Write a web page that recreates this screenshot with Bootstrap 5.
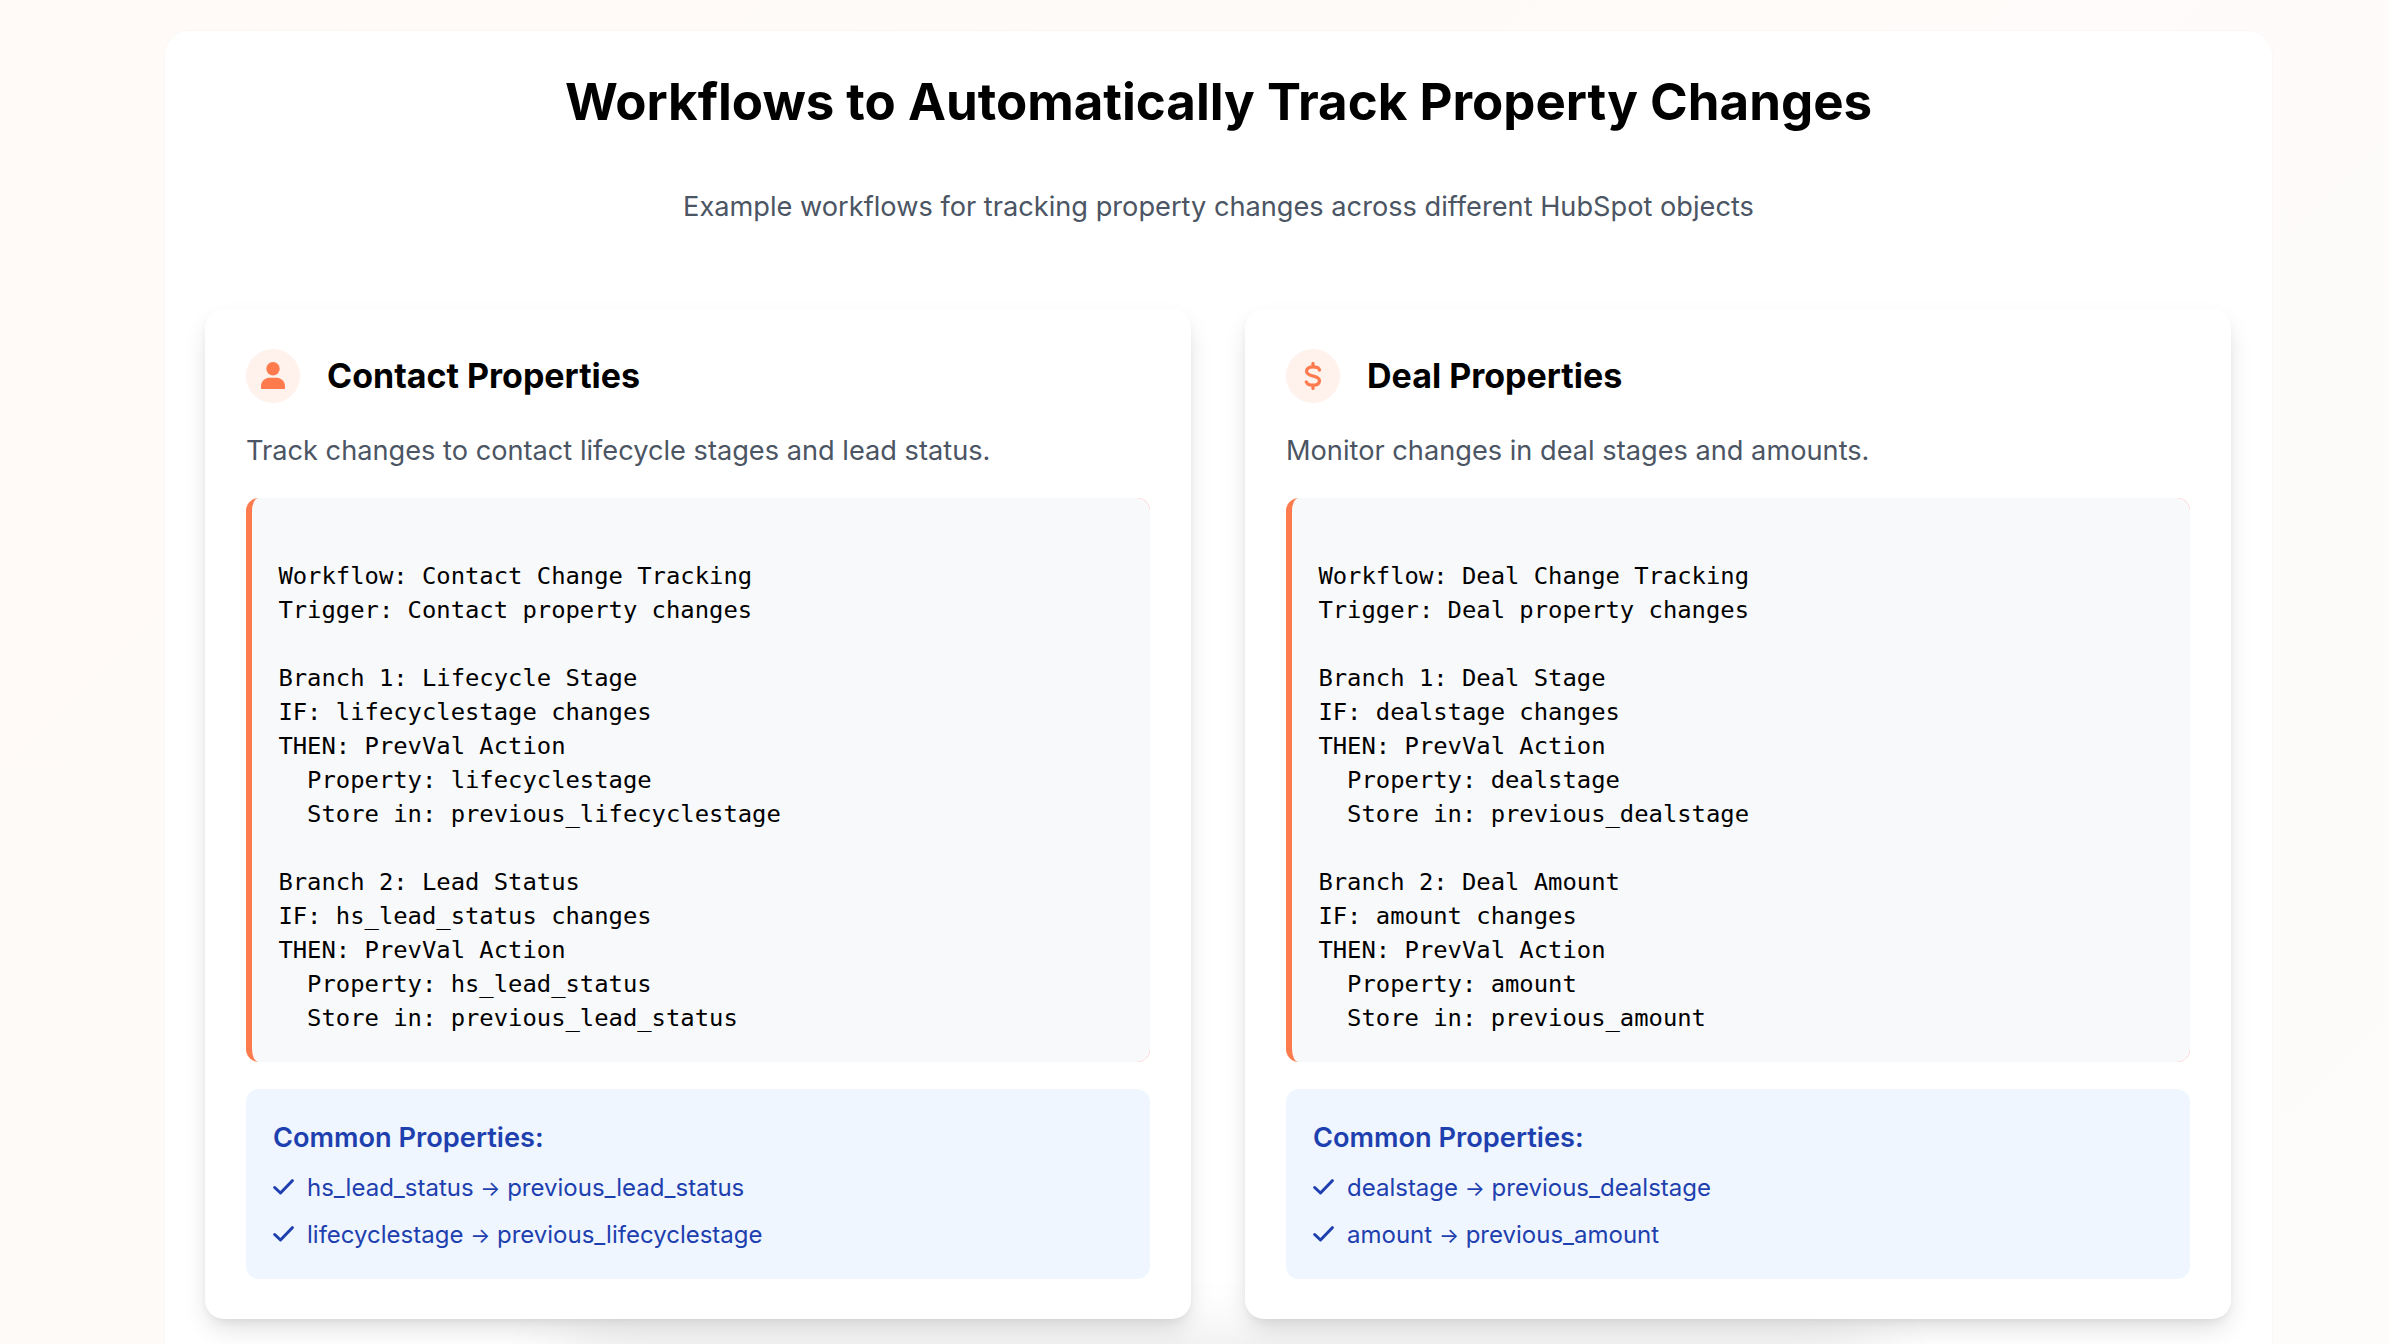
<!doctype html>
<html lang="en"><head><meta charset="utf-8"><title>Workflows</title>
<link href="https://cdn.jsdelivr.net/npm/bootstrap@5.3.0/dist/css/bootstrap.min.css" rel="stylesheet">
<style>
html,body{height:100%;overflow:hidden}
body{font-family:Inter,"Liberation Sans",sans-serif;background:linear-gradient(135deg,#fffaf8 0%,#fdfcfb 100%);padding:31px 117px 0 165px;color:#000}
.sheet{background:#fff;border-radius:24px;padding:40px;box-shadow:0 0 0 1px rgba(200,190,185,.05);min-height:1500px}
.page-title{font-size:51px;font-weight:700;line-height:1.2;margin:0;text-align:center;color:#000}
.page-sub{font-size:27.2px;line-height:1.5;color:#4b5563;margin:54.500px 0 0;text-align:center}
.two-up{display:grid;grid-template-columns:986px 986px;column-gap:54px;margin-top:81.500px}
.panel{background:#fff;border-radius:19px;padding:40px 41px;box-shadow:0 12px 26px -4px rgba(0,0,0,.14),0 4px 8px -2px rgba(0,0,0,.06);height:1010px}
.round-ic{width:54px;height:54px;border-radius:50%;background:#fff1eb;flex:none}
.panel-title{font-size:34px;font-weight:700;line-height:1.2;margin:0 0 0 27px;color:#000}
.panel-desc{font-size:27.2px;line-height:1.5;color:#4b5563;margin:28px 0 0}
.code-wrap{background:#ff7a4d;border-radius:13px;padding-left:6.400px;margin-top:26px}
.code-box{font-family:"DejaVu Sans Mono",monospace;font-size:23.850px;line-height:34px;color:#000;background:#f8f9fb;border-radius:6.600px 13px 13px 6.600px / 13px;margin:0;padding:26.800px 26px 0;height:564px;overflow:hidden}
.props{background:#eff6ff;border-radius:13px;padding:33px 27px 0;margin-top:27px;height:190px;color:#1e40af}
.props-title{font-size:27.2px;font-weight:600;line-height:1.2;margin:0 0 17.500px;color:#1e40af}
.prop-line{font-size:24px;line-height:31px;height:47px;display:flex;align-items:flex-start}
.prop-line svg{flex:none;margin:7px 13px 0 0}
.arw{font-size:21px}
.next-block{width:1310px;height:200px;margin-top:31px;background:#fff;box-shadow:0 0 74px rgba(0,0,0,.12)}
</style></head>
<body>
<main class="sheet">
<h1 class="page-title">Workflows to Automatically Track Property Changes</h1>
<p class="page-sub">Example workflows for tracking property changes across different HubSpot objects</p>
<div class="two-up">
<section class="panel">
<div class="d-flex align-items-center">
<span class="round-ic d-flex align-items-center justify-content-center">
<svg width="24" height="27" viewBox="0 0 24 27"><circle cx="12" cy="6.700" r="6.700" fill="#ff7a4d"/><path d="M.7 27C.2 27 0 26.700 0 26v-2C0 19.500 4 15.800 8 15.800h8c4 0 8 3.700 8 8.200v2c0 .7-.2 1-.7 1z" fill="#ff7a4d"/></svg>
</span>
<h2 class="panel-title">Contact Properties</h2>
</div>
<p class="panel-desc">Track changes to contact lifecycle stages and lead status.</p>
<div class="code-wrap"><pre class="code-box">

Workflow: Contact Change Tracking
Trigger: Contact property changes

Branch 1: Lifecycle Stage
IF: lifecyclestage changes
THEN: PrevVal Action
  Property: lifecyclestage
  Store in: previous_lifecyclestage

Branch 2: Lead Status
IF: hs_lead_status changes
THEN: PrevVal Action
  Property: hs_lead_status
  Store in: previous_lead_status</pre></div>
<div class="props">
<h3 class="props-title">Common Properties:</h3>
<div class="prop-line"><svg width="21" height="16" viewBox="0 0 21 16"><path d="M1.700 8.500 7.500 14 19.300 1.700" fill="none" stroke="#1e40af" stroke-width="3" stroke-linecap="round" stroke-linejoin="round"/></svg><span>hs_lead_status <span class="arw">→</span> previous_lead_status</span></div>
<div class="prop-line"><svg width="21" height="16" viewBox="0 0 21 16"><path d="M1.700 8.500 7.500 14 19.300 1.700" fill="none" stroke="#1e40af" stroke-width="3" stroke-linecap="round" stroke-linejoin="round"/></svg><span>lifecyclestage <span class="arw">→</span> previous_lifecyclestage</span></div>
</div>
</section>
<section class="panel">
<div class="d-flex align-items-center">
<span class="round-ic d-flex align-items-center justify-content-center">
<svg width="18" height="28" viewBox="0 0 18 28"><path d="M9 1.500v3.500M9 23v3.500M15.500 8C15 6 12.500 4.800 9 4.800 5 4.800 2.500 6.500 2.500 9.300 2.500 15.500 15.500 12.500 15.500 18.800 15.500 21.600 13 23.200 9 23.200 5.500 23.200 3 22 2.300 20" fill="none" stroke="#ff7a4d" stroke-width="3.200" stroke-linecap="round"/></svg>
</span>
<h2 class="panel-title">Deal Properties</h2>
</div>
<p class="panel-desc">Monitor changes in deal stages and amounts.</p>
<div class="code-wrap"><pre class="code-box">

Workflow: Deal Change Tracking
Trigger: Deal property changes

Branch 1: Deal Stage
IF: dealstage changes
THEN: PrevVal Action
  Property: dealstage
  Store in: previous_dealstage

Branch 2: Deal Amount
IF: amount changes
THEN: PrevVal Action
  Property: amount
  Store in: previous_amount</pre></div>
<div class="props">
<h3 class="props-title">Common Properties:</h3>
<div class="prop-line"><svg width="21" height="16" viewBox="0 0 21 16"><path d="M1.700 8.500 7.500 14 19.300 1.700" fill="none" stroke="#1e40af" stroke-width="3" stroke-linecap="round" stroke-linejoin="round"/></svg><span>dealstage <span class="arw">→</span> previous_dealstage</span></div>
<div class="prop-line"><svg width="21" height="16" viewBox="0 0 21 16"><path d="M1.700 8.500 7.500 14 19.300 1.700" fill="none" stroke="#1e40af" stroke-width="3" stroke-linecap="round" stroke-linejoin="round"/></svg><span>amount <span class="arw">→</span> previous_amount</span></div>
</div>
</section>
</div>
<div class="next-block mx-auto"></div>
</main>
<script src="https://cdn.jsdelivr.net/npm/bootstrap@5.3.0/dist/js/bootstrap.bundle.min.js"></script>
</body></html>
